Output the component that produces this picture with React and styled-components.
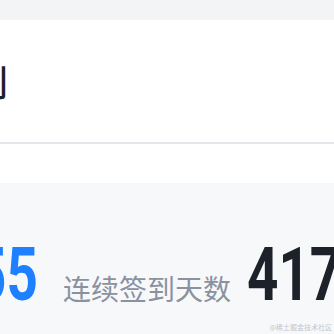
import React from "react";
import styled, { createGlobalStyle } from "styled-components";

const GlobalStyle = createGlobalStyle`
    html, body {
        margin: 0;
        padding: 0;
        background: #ffffff;
        overflow: hidden;
    }
    body {
        font-family: "Noto Sans CJK SC", "Noto Sans", sans-serif;
    }
`;

const Page = styled.div`
    position: relative;
    width: 334px;
    height: 334px;
    overflow: hidden;
    display: flex;
    flex-direction: column;
`;

const TopBand = styled.div`
    height: 20px;
    background-color: #f3f4f5;
    flex-shrink: 0;
`;

const Header = styled.div`
    height: 122px;
    display: flex;
    align-items: center;
    border-bottom: 2px solid #e4e6eb;
    flex-shrink: 0;
`;

const Title = styled.h1`
    margin: 0 0 0 -64px;
    font-family: "Noto Sans CJK SC", sans-serif;
    font-size: 36px;
    font-weight: 500;
    color: #1d2129;
    white-space: nowrap;
    line-height: 1;
`;

const Spacer = styled.div`
    height: 39px;
    flex-shrink: 0;
`;

const Stats = styled.section`
    flex: 1;
    background-color: #f7f8fa;
    display: flex;
    align-items: baseline;
    padding-top: 55px;
    white-space: nowrap;
`;

const Num = styled.span`
    display: inline-block;
    font-family: Roboto, "Liberation Sans", sans-serif;
    font-weight: 700;
    font-size: 74px;
    line-height: 1;
    color: ${({ $accent }) => ($accent ? "#1e80ff" : "#1d2129")};
    transform: scaleX(0.74);
    transform-origin: left bottom;
    margin-left: ${({ $offset }) => $offset || 0}px;
    margin-right: ${({ $shrink }) => $shrink || 0}px;
`;

const Label = styled.span`
    font-family: "Noto Sans CJK SC", sans-serif;
    font-size: 28px;
    color: #8a919f;
    margin: 0 16px 0 25px;
    line-height: 1;
`;

const Watermark = styled.div`
    position: absolute;
    right: 2px;
    bottom: 3px;
    font-family: "Noto Sans CJK SC", sans-serif;
    font-size: 7px;
    color: #c2c6cc;
    line-height: 1;
`;

const App = () => {
    return (
        <Page>
            <GlobalStyle />
            <TopBand />
            <Header>
                <Title>签到</Title>
            </Header>
            <Spacer />
            <Stats>
                <Num $accent $offset={-25} $shrink={-22}>55</Num>
                <Label>连续签到天数</Label>
                <Num>417</Num>
            </Stats>
            <Watermark>@稀土掘金技术社区</Watermark>
        </Page>
    );
};

export default App;
